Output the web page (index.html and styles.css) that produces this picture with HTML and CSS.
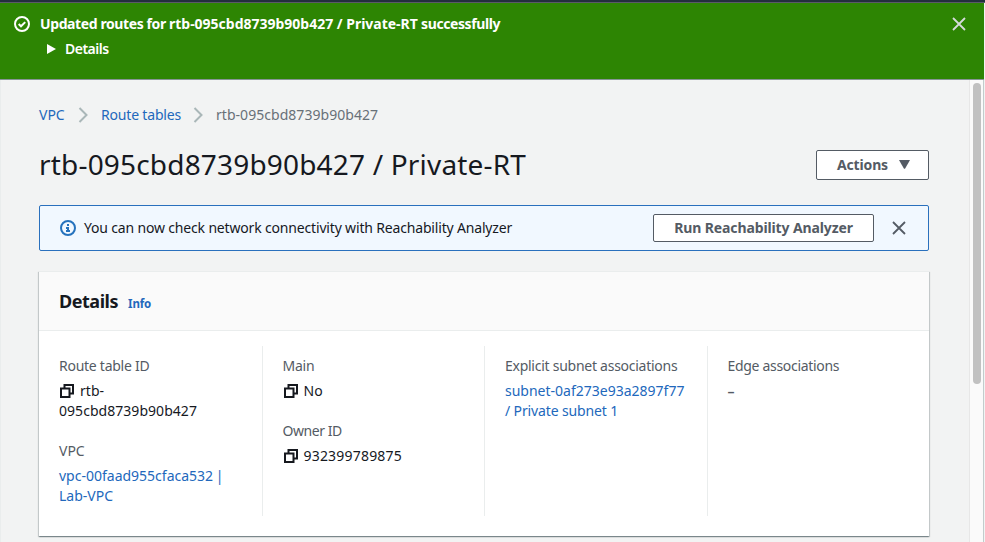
FILE: index.html
```
<!DOCTYPE html>
<html lang="en">
<head>
<meta charset="utf-8">
<title>Route table details | VPC</title>
<link rel="stylesheet" href="styles.css">
</head>
<body>
<div class="topbar"></div>
<div class="flash">
  <svg class="flash-icon" viewBox="0 0 16 16"><circle cx="8" cy="8" r="7"/><path d="M4.7 8l2.3 2.3 4.2-4.2"/></svg>
  <div class="flash-content">
    <div class="flash-title">Updated routes for <span class="resource">rtb-095cbd8739b90b427 / Private-RT</span> successfully</div>
    <div class="flash-details"><svg class="caret" viewBox="0 0 9 10"><path d="M0 0l9 5-9 5z"/></svg><span>Details</span></div>
  </div>
  <svg class="flash-close" viewBox="0 0 16 16"><path d="M2 2l12 12M14 2L2 14"/></svg>
</div>
<div class="workspace">
  <main class="content">
    <nav class="breadcrumbs">
      <a class="crumb-vpc">VPC</a>
      <svg class="chevron" viewBox="0 0 10 16"><path d="M1.5 1l7 7-7 7"/></svg>
      <a class="crumb-tables">Route tables</a>
      <svg class="chevron" viewBox="0 0 10 16"><path d="M1.5 1l7 7-7 7"/></svg>
      <span class="crumb-current">rtb-095cbd8739b90b427</span>
    </nav>
    <header class="page-header">
      <h1>rtb-095cbd8739b90b427 / Private-RT</h1>
      <button class="button actions">Actions<svg class="caret-down" viewBox="0 0 11 9"><path d="M0 0h11L6.3 8.2q-.8 1-1.6 0z"/></svg></button>
    </header>
    <section class="notice">
      <svg class="notice-icon" viewBox="0 0 16 16"><circle cx="8" cy="8" r="7"/><path d="M8 4v2M6 8h2v3M6 11h4"/></svg>
      <span class="notice-text">You can now check network connectivity with Reachability Analyzer</span>
      <button class="button run">Run Reachability Analyzer</button>
      <svg class="notice-close" viewBox="0 0 16 16"><path d="M2 2l12 12M14 2L2 14"/></svg>
    </section>
    <section class="panel">
      <header class="panel-header"><h2>Details</h2><a class="info">Info</a></header>
      <div class="columns">
        <div class="column">
          <div class="field">
            <div class="label">Route table ID</div>
            <div class="value id"><svg class="copy" viewBox="0 0 14 14"><path d="M1 4.5h8.5V13H1zM4.5 4.5V1H13v8.5H9.5"/></svg>rtb-<br>095cbd8739b90b427</div>
          </div>
          <div class="field">
            <div class="label wide">VPC</div>
            <div class="value link"><span class="vpc">vpc-00faad955cfaca532</span> |<br>Lab-VPC</div>
          </div>
        </div>
        <div class="column">
          <div class="field">
            <div class="label">Main</div>
            <div class="value"><svg class="copy" viewBox="0 0 14 14"><path d="M1 4.5h8.5V13H1zM4.5 4.5V1H13v8.5H9.5"/></svg>No</div>
          </div>
          <div class="field">
            <div class="label owner">Owner ID</div>
            <div class="value number"><svg class="copy" viewBox="0 0 14 14"><path d="M1 4.5h8.5V13H1zM4.5 4.5V1H13v8.5H9.5"/></svg>932399789875</div>
          </div>
        </div>
        <div class="column">
          <div class="field">
            <div class="label">Explicit subnet associations</div>
            <div class="value link">subnet-0af273e93a2897f77<br><span class="subnet-name">/ Private subnet 1</span></div>
          </div>
        </div>
        <div class="column">
          <div class="field">
            <div class="label edge">Edge associations</div>
            <div class="value muted">–</div>
          </div>
        </div>
      </div>
    </section>
  </main>
  <div class="scrollbar"><div class="thumb"></div></div>
</div>
</body>
</html>
```
FILE: styles.css
```
* { box-sizing: border-box; }
body {
  margin: 0;
  height: 542px;
  overflow: hidden;
  display: flex;
  flex-direction: column;
  background: #f2f3f3;
  color: #16191f;
  font: 14px/20px "Noto Sans", sans-serif;
}
svg { fill: none; stroke: currentColor; stroke-width: 2; flex: none; }
h1, h2 { margin: 0; }

.topbar { height: 3px; background: #232f3e; border-bottom: 1px solid #5a5a68; }
.flash {
  height: 77px;
  display: flex;
  align-items: flex-start;
  padding: 11px 17px 0 14px;
  margin-right: 1px;
  background: #2d8503;
  border-bottom: 1px solid #879596;
  color: #fff;
}
.flash-icon { width: 16px; height: 16px; margin: 2px 10px 0 0; }
.flash-content { flex: 1; }
.flash-title { font-weight: 700; letter-spacing: -0.4px; }
.resource { letter-spacing: -0.01px; }
.flash-details {
  display: flex;
  align-items: center;
  gap: 10px;
  margin-top: 5px;
  padding-left: 7px;
  font-weight: 600;
  letter-spacing: -0.5px;
}
.caret { width: 9px; height: 10px; margin-right: -1px; fill: currentColor; stroke: none; }
.flash-close { width: 16px; height: 16px; margin-top: 2px; color: #d5dbdb; }

.workspace { flex: 1; display: flex; min-height: 0; }
.content {
  flex: 1;
  min-width: 0;
  padding: 25px 40px 0 38px;
  border-left: 1px solid #eaeded;
}
.breadcrumbs { display: flex; align-items: center; height: 20px; color: #687078; }
.breadcrumbs a { color: #2268bc; }
.chevron { width: 10px; height: 16px; margin: 0 13px 0 12px; color: #aab7b8; }
.crumb-vpc { width: 27px; }
.crumb-tables { width: 80px; letter-spacing: -0.18px; }
.crumb-current { letter-spacing: 0.04px; }

.page-header {
  display: flex;
  align-items: center;
  justify-content: space-between;
  height: 36px;
  margin-top: 21px;
}
h1 { font-size: 28px; line-height: 36px; font-weight: 400; letter-spacing: 0.18px; }
.page-header .actions { margin-top: 1px; }
.button {
  display: flex;
  align-items: center;
  justify-content: center;
  padding: 0;
  background: #fff;
  border: 1px solid #545b64;
  border-radius: 2px;
  color: #545b64;
  font: 700 14px/20px "Noto Sans", sans-serif;
}
.actions { width: 113px; height: 30px; padding-left: 2px; letter-spacing: -0.15px; }
.caret-down { width: 11px; height: 9px; margin-left: 11px; fill: currentColor; stroke: none; }

.notice {
  display: flex;
  align-items: center;
  height: 46px;
  margin-top: 23px;
  padding: 0 21px 0 20px;
  background: #f1f8ff;
  border: 1px solid #2a70bd;
  border-radius: 2px;
}
.notice-icon { width: 16px; height: 16px; margin-right: 8px; color: #2572bd; }
.notice-text { flex: 1; letter-spacing: -0.17px; white-space: nowrap; }
.run { width: 221px; height: 28px; letter-spacing: -0.12px; }
.notice-close { width: 16px; height: 16px; margin-left: 17px; color: #545b64; }
.flash-close, .notice-close { stroke-width: 1.8; }

.panel {
  height: 265px;
  margin-top: 20px;
  background: #fff;
  border-top: 1px solid #eaeded;
  box-shadow: 0 1px 1px rgba(0, 28, 36, 0.3), 1px 1px 1px rgba(0, 28, 36, 0.15), -1px 1px 1px rgba(0, 28, 36, 0.15);
}
.panel-header {
  display: flex;
  align-items: baseline;
  height: 59px;
  padding: 17px 20px 0;
  background: #fafafa;
  border-bottom: 1px solid #eaeded;
}
h2 { font-size: 18px; line-height: 24px; letter-spacing: -0.47px; }
.info { margin-left: 10px; color: #2268bc; font-size: 11.5px; font-weight: 700; letter-spacing: -0.1px; }
.columns { display: grid; grid-template-columns: repeat(4, 1fr); height: 170px; margin-top: 15px; }
.column { padding: 10px 0 0 20px; }
.column + .column { border-left: 1px solid #eaeded; }
.field + .field { margin-top: 20px; }
.label { color: #545b64; letter-spacing: -0.26px; margin-bottom: 5px; }
.wide { letter-spacing: 0; }
.edge { letter-spacing: -0.31px; }
.owner { letter-spacing: -0.45px; }
.value { white-space: nowrap; }
.id { letter-spacing: 0.04px; }
.number { letter-spacing: 0.2px; }
.link { color: #2268bc; }
.vpc { letter-spacing: 0; }
.link .vpc { margin-right: -1px; }
.subnet-name { letter-spacing: -0.13px; }
.muted { color: #545b64; font-weight: 600; }
.copy { width: 14px; height: 14px; margin: 0 6px 0 1px; vertical-align: -2px; }

.scrollbar {
  width: 15px;
  margin-right: 1px;
  padding: 3px 2px 0 3px;
  background: #fafafa;
  border-left: 1px solid #e7e7e7;
  border-right: 1px solid #c2cccc;
}
.thumb { width: 8px; height: 301px; border-radius: 4px; background: #c1c1c1; }
```
